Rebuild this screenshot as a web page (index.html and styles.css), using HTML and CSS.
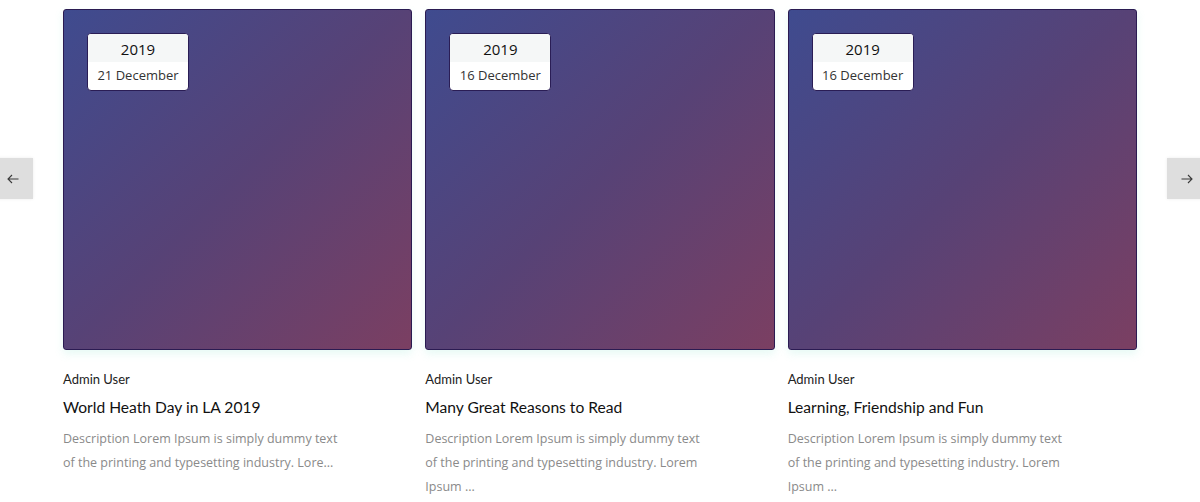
FILE: index.html
```html
<!DOCTYPE html>
<html>
<head>
<meta charset="utf-8">
<link rel="stylesheet" href="styles.css">
</head>
<body>
<div class="slider">
  <button class="arrow arrow-left" aria-label="Previous">
    <svg width="12" height="10" viewBox="0 0 12 10"><path d="M11.5 5H1M5 1L1 5l4 4" fill="none" stroke="#3a3a3a" stroke-width="1.1"/></svg>
  </button>
  <div class="cards">
    <article class="card">
      <div class="thumb">
        <div class="date"><div class="year">2019</div><div class="day">21 December</div></div>
      </div>
      <div class="author">Admin User</div>
      <h3 class="title">World Heath Day in LA 2019</h3>
      <p class="desc">Description Lorem Ipsum is simply dummy text of the printing and typesetting industry. Lore...</p>
    </article>
    <article class="card">
      <div class="thumb">
        <div class="date"><div class="year">2019</div><div class="day">16 December</div></div>
      </div>
      <div class="author">Admin User</div>
      <h3 class="title">Many Great Reasons to Read</h3>
      <p class="desc">Description Lorem Ipsum is simply dummy text of the printing and typesetting industry. Lorem Ipsum ...</p>
    </article>
    <article class="card">
      <div class="thumb">
        <div class="date"><div class="year">2019</div><div class="day">16 December</div></div>
      </div>
      <div class="author">Admin User</div>
      <h3 class="title">Learning, Friendship and Fun</h3>
      <p class="desc">Description Lorem Ipsum is simply dummy text of the printing and typesetting industry. Lorem Ipsum ...</p>
    </article>
  </div>
  <button class="arrow arrow-right" aria-label="Next">
    <svg width="12" height="10" viewBox="0 0 12 10"><path d="M0.5 5H11M7 1l4 4-4 4" fill="none" stroke="#3a3a3a" stroke-width="1.1"/></svg>
  </button>
</div>
</body>
</html>
```
FILE: styles.css
```css
* { box-sizing: border-box; }
html, body { margin: 0; padding: 0; background: #fff; }
body { font-family: "Open Sans", sans-serif; }

.slider {
  position: relative;
  padding: 9px 63px 0 63px;
}

.cards {
  display: grid;
  grid-template-columns: repeat(3, 1fr);
  column-gap: 13px;
}

.thumb {
  position: relative;
  height: 341px;
  border: 1px solid #2b1b52;
  border-radius: 3px;
  background: linear-gradient(135deg, #3f4b8f 0%, #574276 50%, #7b3f62 100%);
  box-shadow: 0 4px 8px rgba(120, 230, 200, 0.18);
  padding: 23px;
}

.date {
  width: 102px;
  border: 1px solid #2a1d55;
  border-radius: 4px;
  background: #fff;
  overflow: hidden;
  text-align: center;
}
.year {
  background: #f5f7f7;
  height: 28px;
  line-height: 31px;
  font-size: 15px;
  color: #111;
}
.day {
  height: 28px;
  line-height: 26px;
  font-size: 13px;
  color: #333;
}

.author {
  margin-top: 21px;
  font-family: "Lato", sans-serif;
  font-size: 13px;
  line-height: 16px;
  color: #222;
}
.title {
  margin: 10px 0 0 0;
  font-family: "Lato", sans-serif;
  font-weight: 400;
  font-size: 15.6px;
  line-height: 20px;
  color: #111;
}
.desc {
  margin: 10px 0 0 0;
  max-width: 285px;
  font-size: 12.5px;
  line-height: 24px;
  color: #8a8a8a;
}

.arrow {
  position: absolute;
  top: 158px;
  width: 40px;
  height: 41px;
  border: none;
  background: #dedede;
  padding: 0;
  display: flex;
  align-items: center;
  justify-content: center;
  box-shadow: 0 0 3px rgba(0,0,0,0.08);
  cursor: pointer;
}
.arrow-left { left: -7px; }
.arrow-right { right: -7px; }
```
